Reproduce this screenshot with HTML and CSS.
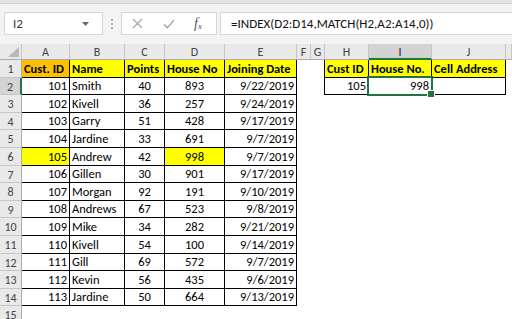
FILE: index.html
```html
<!DOCTYPE html>
<html>
<head>
<meta charset="utf-8">
<link rel="stylesheet" href="styles.css">
</head>
<body>
<div class="app">
  <div class="ribbon-edge"></div>
  <div class="fbar">
    <div class="namebox"><span class="ref">I2</span><svg class="dd" width="7" height="4" viewBox="0 0 7 4"><path d="M0 0H7L3.5 4Z" fill="#6a6a6a"/></svg></div>
    <div class="grip"><i></i><i></i><i></i></div>
    <div class="fxbox">
      <svg class="ico" width="11" height="11" viewBox="0 0 11 11"><path d="M1 1L10 10M10 1L1 10" stroke="#a6a6a6" stroke-width="1.2" fill="none"/></svg>
      <svg class="ico" width="12" height="10" viewBox="0 0 12 10"><path d="M1 5.5L4.3 8.8L11 1.2" stroke="#a6a6a6" stroke-width="1.3" fill="none"/></svg>
      <span class="fx">f<sub>x</sub></span>
    </div>
    <div class="formula">=INDEX(D2:D14,MATCH(H2,A2:A14,0))</div>
  </div>
  <div class="sheet">
    <div class="corner"><svg class="tri" width="11" height="10" viewBox="0 0 11 10"><path d="M11 0V10H0Z" fill="#b8b8b8"/></svg></div>
    <div class="ch">A</div><div class="ch">B</div><div class="ch">C</div><div class="ch">D</div><div class="ch">E</div><div class="ch">F</div><div class="ch">G</div><div class="ch">H</div><div class="ch sel">I</div><div class="ch">J</div><div class="ch"></div>

    <div class="rh">1</div>
    <div class="b hd org">Cust. ID</div><div class="b hd yel">Name</div><div class="b hd yel">Points</div><div class="b hd yel">House No</div><div class="b hd yel">Joining Date</div>
    <div class="e"></div><div class="e bk"></div>
    <div class="b hd yel">Cust ID</div><div class="b hd yel">House No.</div><div class="b hd yel">Cell Address</div><div class="e"></div>

    <div class="rh sel">2</div>
    <div class="b r">101</div><div class="b l">Smith</div><div class="b m">40</div><div class="b m">893</div><div class="b r">9/22/2019</div>
    <div class="e"></div><div class="e bk"></div>
    <div class="b r">105</div><div class="b r cur">998</div><div class="b"></div><div class="e"></div>

    <div class="rh">3</div>
    <div class="b r">102</div><div class="b l">Kivell</div><div class="b m">36</div><div class="b m">257</div><div class="b r">9/24/2019</div>
    <div class="e"></div><div class="e"></div><div class="e"></div><div class="e"></div><div class="e"></div><div class="e"></div>

    <div class="rh">4</div>
    <div class="b r">103</div><div class="b l">Garry</div><div class="b m">51</div><div class="b m">428</div><div class="b r">9/17/2019</div>
    <div class="e"></div><div class="e"></div><div class="e"></div><div class="e"></div><div class="e"></div><div class="e"></div>

    <div class="rh">5</div>
    <div class="b r">104</div><div class="b l">Jardine</div><div class="b m">33</div><div class="b m">691</div><div class="b r">9/7/2019</div>
    <div class="e"></div><div class="e"></div><div class="e"></div><div class="e"></div><div class="e"></div><div class="e"></div>

    <div class="rh">6</div>
    <div class="b r yel">105</div><div class="b l">Andrew</div><div class="b m">42</div><div class="b m yel">998</div><div class="b r">9/7/2019</div>
    <div class="e"></div><div class="e"></div><div class="e"></div><div class="e"></div><div class="e"></div><div class="e"></div>

    <div class="rh">7</div>
    <div class="b r">106</div><div class="b l">Gillen</div><div class="b m">30</div><div class="b m">901</div><div class="b r">9/17/2019</div>
    <div class="e"></div><div class="e"></div><div class="e"></div><div class="e"></div><div class="e"></div><div class="e"></div>

    <div class="rh">8</div>
    <div class="b r">107</div><div class="b l">Morgan</div><div class="b m">92</div><div class="b m">191</div><div class="b r">9/10/2019</div>
    <div class="e"></div><div class="e"></div><div class="e"></div><div class="e"></div><div class="e"></div><div class="e"></div>

    <div class="rh">9</div>
    <div class="b r">108</div><div class="b l">Andrews</div><div class="b m">67</div><div class="b m">523</div><div class="b r">9/8/2019</div>
    <div class="e"></div><div class="e"></div><div class="e"></div><div class="e"></div><div class="e"></div><div class="e"></div>

    <div class="rh">10</div>
    <div class="b r">109</div><div class="b l">Mike</div><div class="b m">34</div><div class="b m">282</div><div class="b r">9/21/2019</div>
    <div class="e"></div><div class="e"></div><div class="e"></div><div class="e"></div><div class="e"></div><div class="e"></div>

    <div class="rh">11</div>
    <div class="b r">110</div><div class="b l">Kivell</div><div class="b m">54</div><div class="b m">100</div><div class="b r">9/14/2019</div>
    <div class="e"></div><div class="e"></div><div class="e"></div><div class="e"></div><div class="e"></div><div class="e"></div>

    <div class="rh">12</div>
    <div class="b r">111</div><div class="b l">Gill</div><div class="b m">69</div><div class="b m">572</div><div class="b r">9/7/2019</div>
    <div class="e"></div><div class="e"></div><div class="e"></div><div class="e"></div><div class="e"></div><div class="e"></div>

    <div class="rh">13</div>
    <div class="b r">112</div><div class="b l">Kevin</div><div class="b m">56</div><div class="b m">435</div><div class="b r">9/6/2019</div>
    <div class="e"></div><div class="e"></div><div class="e"></div><div class="e"></div><div class="e"></div><div class="e"></div>

    <div class="rh">14</div>
    <div class="b r">113</div><div class="b l">Jardine</div><div class="b m">50</div><div class="b m">664</div><div class="b r">9/13/2019</div>
    <div class="e"></div><div class="e"></div><div class="e"></div><div class="e"></div><div class="e"></div><div class="e"></div>

    <div class="rh">15</div>
    <div class="e"></div><div class="e"></div><div class="e"></div><div class="e"></div><div class="e"></div><div class="e"></div><div class="e"></div><div class="e"></div><div class="e"></div><div class="e"></div><div class="e"></div>
  </div>
</div>
</body>
</html>
```

FILE: styles.css
```css
* { box-sizing: border-box; margin: 0; padding: 0; }
html, body { width: 512px; height: 319px; overflow: hidden; background: #fff; }
body { font-family: "Carlito", "Lato", "Liberation Sans", sans-serif; font-size: 12.5px; color: #000; }

.app { width: 512px; height: 319px; overflow: hidden; display: flex; flex-direction: column; background: #f3f3f3; }
.ribbon-edge { height: 4px; flex: none; background: #e3e3e3; border-bottom: 1px solid #d4d4d4; }

.fbar { height: 40px; flex: none; display: flex; align-items: flex-start; padding: 8px 0 0 4px; }
.namebox { width: 99px; height: 23px; background: #fff; border: 1px solid #d6d6d6; display: flex; align-items: center; padding-left: 8px; }
.ref { font-size: 13px; color: #333; }
.dd { margin-left: auto; margin-right: 13px; }
.grip { width: 18px; height: 23px; display: flex; flex-direction: column; align-items: center; justify-content: center; gap: 2px; }
.grip i { width: 2px; height: 2px; background: #a8a8a8; display: block; }
.fxbox { width: 96px; height: 23px; background: #fff; border: 1px solid #d6d6d6; display: flex; align-items: center; padding-left: 10px; gap: 20px; }
.fx { font-family: "Liberation Serif", serif; font-style: italic; font-size: 14px; color: #555; margin-left: -1px; }
.fx sub { font-size: 9px; vertical-align: -1px; }
.formula { flex: 1; margin-left: 3px; height: 23px; background: #fff; border: 1px solid #d6d6d6; border-right: none; padding-left: 10px; display: flex; align-items: center; font-size: 13px; color: #111; white-space: nowrap; }

.sheet { flex: 1; display: grid; background: #fff;
  grid-template-columns: 22px 48px 55px 40px 60px 72px 14px 14px 44px 63px 74px 6px;
  grid-template-rows: 16px 18px 17px 18px 17px 18px 18px 17px 18px 17px 18px 18px 17px 18px 17px 18px; }
.sheet > div { display: flex; align-items: center; white-space: nowrap; overflow: visible; line-height: 1; padding: 1px 2px 0 2px; }

.corner { background: #e9e9e9; border-right: 1px solid #c6c6c6; border-bottom: 1px solid #ababab; justify-content: flex-end; align-items: flex-end !important; padding: 0 2px 2px 0 !important; }
.ch { background: #e9e9e9; border-right: 1px solid #c6c6c6; border-bottom: 1px solid #ababab; justify-content: center; color: #444; font-size: 12px; }
.ch.sel { background: #d3d3d3; border-bottom: 2px solid #217346; color: #222; }
.rh { background: #e9e9e9; border-right: 1px solid #ababab; border-bottom: 1px solid #c6c6c6; justify-content: center; color: #444; font-size: 12px; }
.rh.sel { background: #d3d3d3; border-right: 2px solid #217346; }

.b { border-right: 1px solid #000; border-bottom: 1px solid #000; }
.bk { border-right: 1px solid #000; }
.hd { font-weight: bold; justify-content: flex-start; }
.org { background: #ffc000; }
.yel { background: #ffff00; }
.r { justify-content: flex-end; }
.l { justify-content: flex-start; }
.m { justify-content: center; }

.cur { position: relative; }
.cur::after { content: ""; position: absolute; left: -2px; top: -2px; right: -2px; bottom: -2px; border: 2px solid #217346; z-index: 2; }
.cur::before { content: ""; position: absolute; right: -4px; bottom: -4px; width: 6px; height: 6px; background: #217346; border: 1px solid #fff; z-index: 3; }
```
